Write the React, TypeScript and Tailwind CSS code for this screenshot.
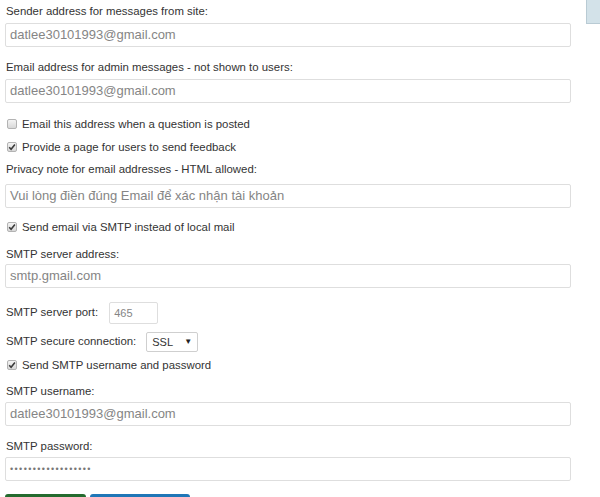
import React from 'react'

const font = { fontFamily: '"Liberation Sans", Arial, sans-serif' }

function Label({ text, className = '' }: { text: string; className?: string }) {
  return <div className={`h-[18px] leading-[18px] text-[11.4px] text-[#333] ${className}`}>{text}</div>
}

function TextBox({
  value,
  className = '',
  children,
}: {
  value?: string
  className?: string
  children?: React.ReactNode
}) {
  return (
    <div
      className={`h-[24px] w-[566px] border border-[#dedede] rounded-[2px] bg-white pl-[4px] leading-[22px] text-[13px] text-[#858585] ${className}`}
    >
      {value}
      {children}
    </div>
  )
}

function Check({ checked, text, className = '' }: { checked: boolean; text: string; className?: string }) {
  return (
    <div className={`flex items-center h-[18px] pl-[2px] text-[11.4px] text-[#333] ${className}`}>
      <span className="w-[10px] h-[10px] rounded-[2px] border border-[#b3b3b3] bg-gradient-to-b from-[#f4f4f4] to-[#d8d8d8] flex items-center justify-center">
        {checked && (
          <svg width="8" height="8" viewBox="0 0 8 8">
            <path d="M1.2 4.2 L3.1 6.2 L6.9 1.6" stroke="#3a3a3a" strokeWidth="1.6" fill="none" />
          </svg>
        )}
      </span>
      <span className="ml-[5px] leading-[18px]">{text}</span>
    </div>
  )
}

export default function App() {
  return (
    <div className="w-[600px] h-[497px] overflow-hidden bg-white flex" style={font}>
      <div className="pl-[5px] w-[580px]">
        <Label text="Sender address for messages from site:" className="mt-[2px] pl-[1px]" />
        <TextBox value="datlee30101993@gmail.com" className="mt-[3px]" />

        <Label text="Email address for admin messages - not shown to users:" className="mt-[11px] pl-[1px]" />
        <TextBox value="datlee30101993@gmail.com" className="mt-[3px]" />

        <Check checked={false} text="Email this address when a question is posted" className="mt-[12px]" />
        <Check checked={true} text="Provide a page for users to send feedback" className="mt-[5px]" />

        <Label text="Privacy note for email addresses - HTML allowed:" className="mt-[4px] pl-[1px]" />
        <TextBox value="Vui lòng điền đúng Email để xác nhận tài khoản" className="mt-[6px]" />

        <Check checked={true} text="Send email via SMTP instead of local mail" className="mt-[10px]" />

        <Label text="SMTP server address:" className="mt-[9px] pl-[1px]" />
        <TextBox value="smtp.gmail.com" className="mt-[1px]" />

        <div className="mt-[14px] flex items-center h-[22px]">
          <span className="pl-[1px] text-[11.4px] text-[#333]">SMTP server port:</span>
          <div className="ml-[11px] w-[49px] h-[22px] border border-[#dedede] rounded-[2px] pl-[4px] leading-[20px] text-[11px] text-[#858585]">
            465
          </div>
        </div>

        <div className="mt-[8px] flex items-center h-[20px]">
          <span className="pl-[1px] text-[11.4px] text-[#333]">SMTP secure connection:</span>
          <div className="ml-[10px] w-[52px] h-[20px] border border-[#cfcfcf] rounded-[2px] flex items-center justify-between pl-[5px] pr-[5px] text-[11px] text-[#333]">
            <span>SSL</span>
            <span className="text-[8px] text-[#222]">▼</span>
          </div>
        </div>

        <Check checked={true} text="Send SMTP username and password" className="mt-[4px]" />

        <Label text="SMTP username:" className="mt-[8px] pl-[1px]" />
        <TextBox value="datlee30101993@gmail.com" className="mt-[2px]" />

        <Label text="SMTP password:" className="mt-[11px] pl-[1px]" />
        <TextBox className="mt-[2px] flex items-center">
          <span className="text-[9px] tracking-[1.4px] text-[#777]">••••••••••••••••••</span>
        </TextBox>

        <div className="mt-[13px] flex gap-[4px]">
          <button aria-label="Save Options" className="w-[81px] h-[30px] rounded-[3px] bg-[#246b2e]" />
          <button aria-label="Reset to Defaults" className="w-[100px] h-[30px] rounded-[3px] bg-[#1f76b7]" />
        </div>
      </div>
      <div className="ml-auto w-[14px] h-[24px] bg-[#d3e2e9] border-l border-b border-[#b9cbd4]" />
    </div>
  )
}
